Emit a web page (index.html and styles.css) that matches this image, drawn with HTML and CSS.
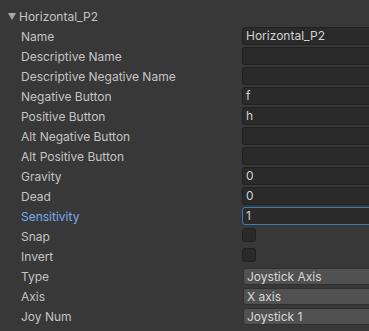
FILE: index.html
```html
<!DOCTYPE html>
<html>
<head>
	<meta charset="utf-8">
	<title>Input Axes</title>
	<link rel="stylesheet" href="styles.css">
</head>
<body>
	<div class="axes">
		<div class="foldout"><span class="arrow"></span>Horizontal_P2</div>

		<div class="row"><span class="label">Name</span><div class="field">Horizontal_P2</div></div>
		<div class="row"><span class="label">Descriptive Name</span><div class="field"></div></div>
		<div class="row"><span class="label">Descriptive Negative Name</span><div class="field"></div></div>
		<div class="row"><span class="label">Negative Button</span><div class="field">f</div></div>
		<div class="row"><span class="label">Positive Button</span><div class="field">h</div></div>
		<div class="row"><span class="label">Alt Negative Button</span><div class="field"></div></div>
		<div class="row"><span class="label">Alt Positive Button</span><div class="field"></div></div>
		<div class="row"><span class="label">Gravity</span><div class="field">0</div></div>
		<div class="row"><span class="label">Dead</span><div class="field">0</div></div>
		<div class="row"><span class="label focus">Sensitivity</span><div class="field active">1</div></div>
		<div class="row"><span class="label">Snap</span><div class="check"></div></div>
		<div class="row"><span class="label">Invert</span><div class="check"></div></div>
		<div class="row"><span class="label">Type</span><div class="popup">Joystick Axis</div></div>
		<div class="row"><span class="label">Axis</span><div class="popup">X axis</div></div>
		<div class="row"><span class="label">Joy Num</span><div class="popup">Joystick 1</div></div>
	</div>
</body>
</html>
```

FILE: styles.css
```css
*{
	padding: 0;
	margin: 0;
	box-sizing: border-box;
}
html, body{
	background-color: #383838;
	overflow: hidden;
}
body{
	font-family: Inter, "Noto Sans", sans-serif;
	font-size: 12px;
	color: #c4c4c4;
}
.axes{
	margin-top: 6px;
	display: flex;
	flex-direction: column;
}
.foldout{
	height: 20px;
	display: flex;
	align-items: center;
	padding-left: 8px;
	gap: 3px;
}
.arrow{
	width: 0;
	height: 0;
	border-left: 4.5px solid transparent;
	border-right: 4.5px solid transparent;
	border-top: 7px solid #a8a8a8;
}
.row{
	height: 20px;
	display: flex;
	align-items: center;
	padding-left: 21px;
}
.label{
	width: 221px;
	white-space: nowrap;
}
.label.focus{
	color: #7babf0;
}
.field{
	flex: 1;
	height: 18px;
	margin-right: -4px;
	background-color: #2a2a2a;
	border: 1px solid #212121;
	border-radius: 3px;
	padding: 0 3px;
	line-height: 16px;
	color: #d2d2d2;
}
.field.active{
	border-color: #3a79bb;
}
.check{
	width: 14px;
	height: 14px;
	margin-top: -2px;
	background-color: #2a2a2a;
	border: 1px solid #212121;
	border-radius: 3px;
}
.popup{
	flex: 1;
	height: 17px;
	margin-left: 1px;
	margin-right: -4px;
	background-color: #515151;
	border: 1px solid #303030;
	border-radius: 3px;
	padding: 0 3px;
	line-height: 15px;
	color: #d8d8d8;
}
```
